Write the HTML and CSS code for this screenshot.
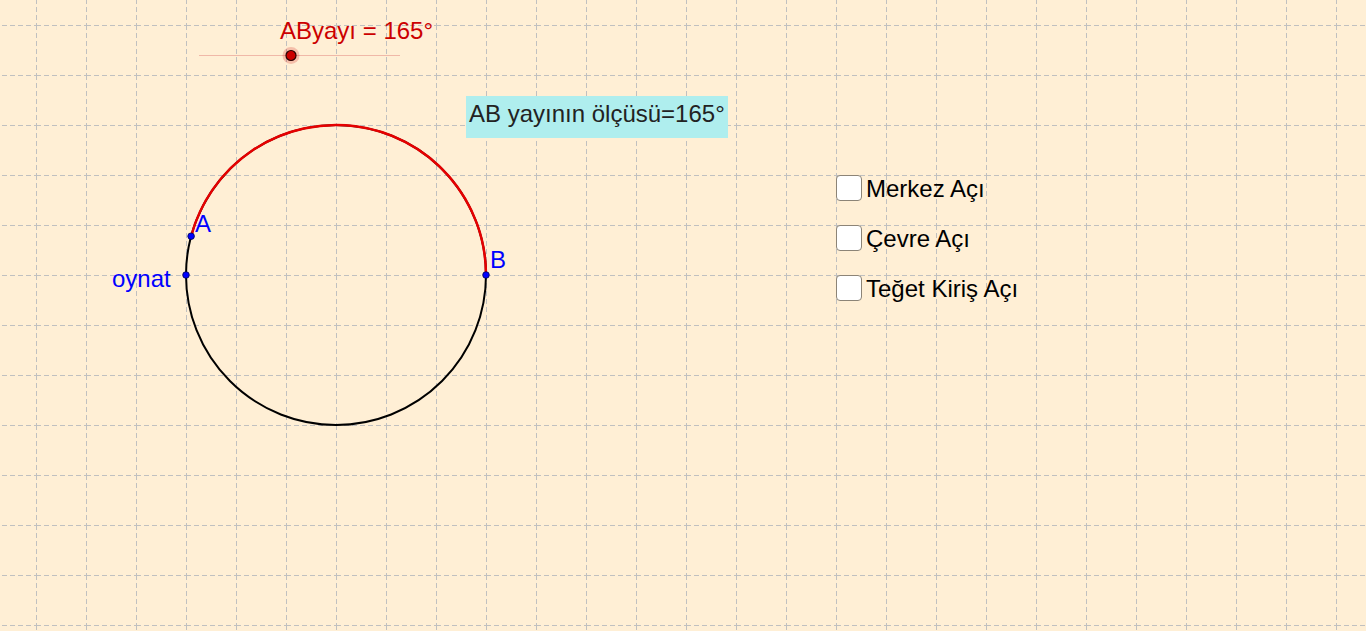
FILE: index.html
```html
<!DOCTYPE html>
<html>
<head>
<meta charset="utf-8">
<link rel="stylesheet" href="styles.css">
</head>
<body>
<div class="applet">
  <svg class="canvas" width="1366" height="631" viewBox="0 0 1366 631">
    <defs>
      <pattern id="grid" x="36" y="25" width="50" height="50" patternUnits="userSpaceOnUse">
        <line x1="0.5" y1="0" x2="0.5" y2="50" class="gl"/>
        <line x1="0" y1="0.5" x2="50" y2="0.5" class="gl"/>
      </pattern>
    </defs>
    <rect x="0" y="0" width="1366" height="631" fill="url(#grid)"/>
    <!-- slider -->
    <line x1="199" y1="55.5" x2="400" y2="55.5" class="slider-line"/>
    <circle cx="291" cy="55.5" r="8.5" class="slider-halo"/>
    <circle cx="291" cy="55.5" r="5" class="slider-knob"/>
    <text x="280" y="39" class="lbl red">AByayı = 165°</text>
    <!-- circle -->
    <circle cx="336" cy="275" r="150" class="circ"/>
    <path d="M 191.1 236.2 A 150 150 0 0 1 486 275" class="arc"/>
    <circle cx="191.1" cy="236.2" r="3.3" class="pt"/>
    <circle cx="486" cy="275" r="3.3" class="pt"/>
    <circle cx="186" cy="275" r="3.3" class="pt"/>
    <text x="195" y="232" class="lbl blue">A</text>
    <text x="490" y="268" class="lbl blue">B</text>
    <text x="112" y="287" class="lbl blue">oynat</text>
  </svg>

  <div class="textbox">AB yayının ölçüsü=165°</div>

  <div class="checks">
    <label class="check"><span class="box"></span><span class="ctext">Merkez Açı</span></label>
    <label class="check"><span class="box"></span><span class="ctext">Çevre Açı</span></label>
    <label class="check"><span class="box"></span><span class="ctext">Teğet Kiriş Açı</span></label>
  </div>
</div>
</body>
</html>
```
FILE: styles.css
```css
html, body {
  margin: 0;
  padding: 0;
  width: 1366px;
  height: 631px;
  overflow: hidden;
  background: #ffefd5;
  font-family: "Liberation Sans", Arial, sans-serif;
}
.applet {
  position: relative;
  width: 1366px;
  height: 631px;
  background: #ffefd5;
}
.canvas {
  position: absolute;
  left: 0;
  top: 0;
  display: block;
}
.gl {
  stroke: #c0c0c0;
  stroke-width: 1;
  stroke-dasharray: 5 3;
}
.slider-line {
  stroke: #f0b8a8;
  stroke-width: 1;
}
.slider-halo {
  fill: #cc0000;
  fill-opacity: 0.2;
}
.slider-knob {
  fill: #cc0000;
  stroke: #2a0000;
  stroke-width: 1.2;
}
.circ {
  fill: none;
  stroke: #000;
  stroke-width: 2;
}
.arc {
  fill: none;
  stroke: #e60000;
  stroke-width: 2.5;
}
.pt {
  fill: #0000ff;
  stroke: #00004d;
  stroke-width: 0.8;
}
.lbl {
  font-family: "Liberation Sans", Arial, sans-serif;
  font-size: 24px;
}
.red { fill: #cc0000; }
.blue { fill: #0000ff; }

.textbox {
  position: absolute;
  left: 466px;
  top: 96px;
  width: 262px;
  height: 42px;
  box-sizing: border-box;
  background: #afeeee;
  color: #222;
  font-size: 24px;
  line-height: 36px;
  padding-left: 3px;
  white-space: nowrap;
}
.checks {
  position: absolute;
  left: 836px;
  top: 175px;
  display: flex;
  flex-direction: column;
  gap: 24px;
}
.check {
  display: flex;
  align-items: center;
  gap: 4px;
  height: 26px;
}
.box {
  width: 26px;
  height: 26px;
  box-sizing: border-box;
  border: 1.5px solid #8c8477;
  border-radius: 4px;
  background: #fff;
}
.ctext {
  font-size: 24px;
  color: #000;
  line-height: 26px;
  position: relative;
  top: 1px;
}
```
